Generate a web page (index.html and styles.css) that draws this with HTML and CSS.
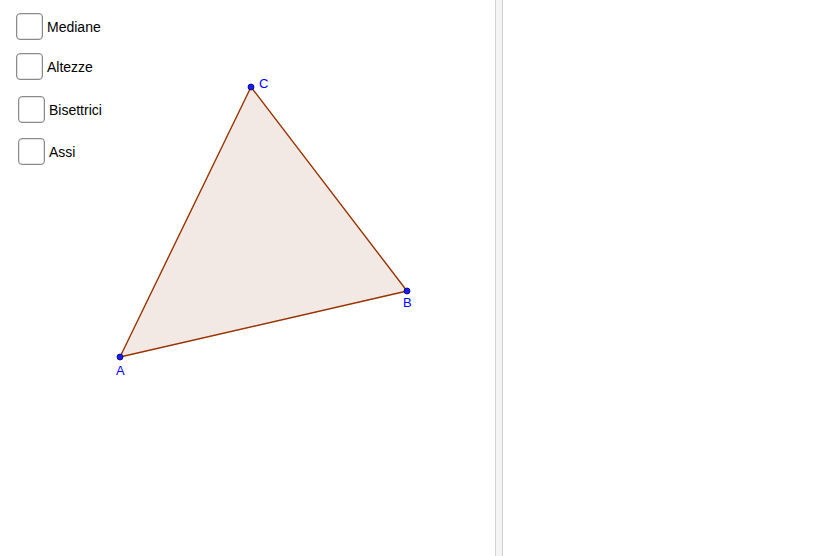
FILE: index.html
```html
<!DOCTYPE html>
<html>
<head>
<meta charset="utf-8">
<link rel="stylesheet" href="styles.css">
</head>
<body>
<div class="app">
  <div class="graphics">
    <svg class="canvas" width="495" height="556" viewBox="0 0 495 556">
      <polygon points="120,357 407,291 251,87" fill="#f3e9e4" stroke="#993300" stroke-width="1.4" stroke-linejoin="round"/>
      <circle cx="120" cy="357" r="3" fill="#1a1aff" stroke="#00006b" stroke-width="0.8"/>
      <circle cx="407" cy="291" r="3" fill="#1a1aff" stroke="#00006b" stroke-width="0.8"/>
      <circle cx="251" cy="87" r="3" fill="#1a1aff" stroke="#00006b" stroke-width="0.8"/>
      <text x="116" y="375" class="lbl">A</text>
      <text x="403" y="307" class="lbl">B</text>
      <text x="259" y="88" class="lbl">C</text>
    </svg>
    <div class="checks">
      <label class="check"><span class="box"></span><span class="txt">Mediane</span></label>
      <label class="check"><span class="box"></span><span class="txt">Altezze</span></label>
      <label class="check shift"><span class="box"></span><span class="txt">Bisettrici</span></label>
      <label class="check shift"><span class="box"></span><span class="txt">Assi</span></label>
    </div>
  </div>
  <div class="divider"></div>
  <div class="side"></div>
</div>
</body>
</html>
```
FILE: styles.css
```css
html, body {
  margin: 0;
  padding: 0;
  background: #ffffff;
  font-family: "Liberation Sans", Arial, sans-serif;
}
.app {
  display: flex;
  width: 838px;
  height: 556px;
  overflow: hidden;
}
.graphics {
  position: relative;
  width: 495px;
  height: 556px;
  flex: none;
}
.canvas {
  position: absolute;
  left: 0;
  top: 0;
}
.lbl {
  fill: #0000ff;
  font-family: "Liberation Sans", Arial, sans-serif;
  font-size: 13px;
}
.checks {
  position: relative;
  display: flex;
  flex-direction: column;
  align-items: flex-start;
  padding: 13px 0 0 16px;
}
.check {
  display: flex;
  align-items: center;
  height: 27px;
  gap: 4px;
  font-size: 14px;
  color: #000;
}
.check + .check {
  margin-top: 13px;
}
.check.shift {
  margin-left: 2px;
  margin-top: 16px;
}
.check.shift + .check.shift {
  margin-top: 15px;
}
.box {
  width: 25px;
  height: 25px;
  border: 1px solid #8a8a8a;
  border-radius: 4px;
  background: #fff;
  box-shadow: inset 0 0 0 0.5px #c8c8c8;
}
.divider {
  flex: none;
  width: 6px;
  height: 556px;
  background: #f4f4f4;
  border-left: 1px solid #d0d0d0;
  border-right: 1px solid #d0d0d0;
}
.side {
  flex: 1;
  background: #fff;
}
```
